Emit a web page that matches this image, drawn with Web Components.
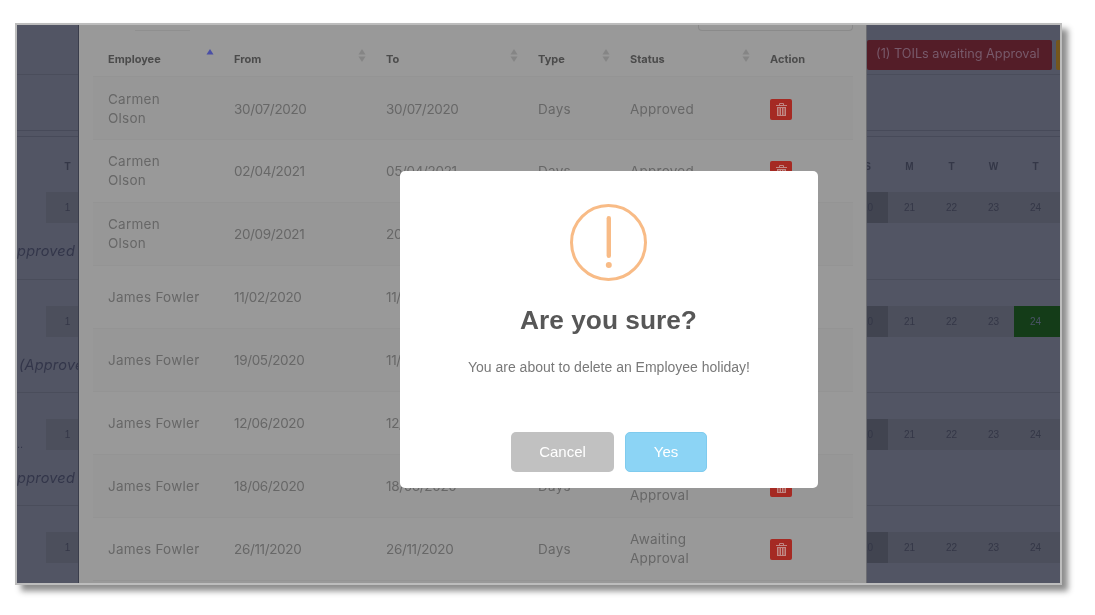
<!DOCTYPE html>
<html lang="en">
<head>
<meta charset="utf-8">
<title>Holidays</title>
<style>
  html, body { margin: 0; background: #fff; }
  body { padding: 23px 0 0 15px; height: 592px; overflow: hidden; }
</style>
</head>
<body>
<app-frame>
  <cal-strip slot="left" side="left"></cal-strip>
  <leave-panel slot="panel"></leave-panel>
  <cal-strip slot="right" side="right"></cal-strip>
  <confirm-dialog slot="dialog" heading="Are you sure?" text="You are about to delete an Employee holiday!"></confirm-dialog>
</app-frame>

<script>
const APP_FONT = '"Inter", "Liberation Sans", sans-serif';

class AppFrame extends HTMLElement {
  constructor() {
    super();
    this.attachShadow({ mode: 'open' });
    this.shadowRoot.innerHTML = `
      <style>
        :host {
          display: block;
          width: 1047px;
          height: 562px;
          box-sizing: border-box;
          border: 2px solid #bdbdbd;
          box-shadow: 6px 6px 6px rgba(0,0,0,0.45);
        }
        .stage {
          position: relative;
          display: grid;
          grid-template-columns: 62px 788px 193px;
          height: 100%;
          overflow: hidden;
          background: #525564;
          filter: blur(0.3px);
        }
      </style>
      <div class="stage">
        <slot name="left"></slot>
        <slot name="panel"></slot>
        <slot name="right"></slot>
        <slot name="dialog"></slot>
      </div>
    `;
  }
}

class CalStrip extends HTMLElement {
  constructor() {
    super();
    this.attachShadow({ mode: 'open' });
  }

  connectedCallback() {
    const left = this.getAttribute('side') === 'left';
    const heads = left ? ['T'] : ['S', 'M', 'T', 'W', 'T'];
    const days = left ? ['1'] : ['20', '21', '22', '23', '24'];
    const notes = left ? ['Approved', '(Approved)', 'Approved', ''] : ['', '', '', ''];
    const leads = ['', '', '..', ''];

    const cells = (row) => days.map((d, i) => {
      let cls = 'cell';
      if (!left && i === 0) cls += ' today';
      if (!left && row === 1 && i === 4) cls += ' green';
      return `<span class="${cls}">${d}</span>`;
    }).join('');

    const rows = notes.map((note, row) => `
      <div class="row ${row === 0 ? 'first' : ''}">
        ${row === 0 ? `<div class="grid head">${left ? '<span class="lead"></span>' : ''}${heads.map(h => `<span>${h}</span>`).join('')}</div>` : ''}
        <div class="grid band">${left ? `<span class="lead">${leads[row]}</span>` : ''}${cells(row)}</div>
        <div class="note ${row === 1 ? 'start' : ''}"><span>${note}</span></div>
      </div>
    `).join('');

    this.shadowRoot.innerHTML = `
      <style>
        :host {
          display: block;
          overflow: hidden;
          min-width: 0;
          font-family: "Liberation Sans", sans-serif;
          color: #33364a;
          box-sizing: border-box;
          ${left ? 'border-right: 1px solid #3a3d4b;' : ''}
        }
        .top { height: 49px; border-bottom: 1px solid #4a4d5b; display: flex; align-items: flex-start; }
        .mid { height: 55px; border-bottom: 1px solid #474a59; }
        .gap { height: 5px; border-bottom: 1px solid #474a59; }
        .alerts { display: flex; gap: 4px; margin-top: 15px; }
        .alert {
          width: 185px;
          height: 30px;
          box-sizing: border-box;
          padding-left: 9px;
          flex: none;
          border-radius: 2px;
          background: #541d28;
          color: #785a6b;
          font: 12.7px/28px ${APP_FONT};
          white-space: nowrap;
        }
        .alert.amber { width: 40px; background: #74561c; }
        .row { padding-top: 26px; box-sizing: border-box; border-bottom: 1px solid #4a4d5b; height: 113px; }
        .row.first { height: 143px; padding-top: 0; }
        .row:last-child { border-bottom: 0; }
        .grid { display: flex; ${left ? '' : 'margin-left: -21px;'} }
        .grid > span { flex: none; width: 42px; padding-left: 1px; box-sizing: border-box; text-align: center; }
        .grid > span:last-child { ${left ? '' : 'width: 46px; padding: 0 3px 0 0;'} }
        .grid > .lead { width: 29px; padding: 0; text-align: left; align-self: flex-end; font-size: 11px; line-height: 12px; }
        .head { height: 55px; padding-top: 24px; box-sizing: border-box; font: bold 10px/12px "Liberation Sans", sans-serif; color: #343747; }
        .band { height: 31px; }
        ${left ? '' : '.band { background: #4c4f5c; }'}
        .cell { font-size: 10px; line-height: 31px; background: #4c4f5c; color: #343747; }
        .cell.today { background: #414450; }
        .cell.green { background: #143c18; color: #4a5366; }
        .note {
          margin-top: 18px;
          height: 20px;
          font: italic 14.5px/20px ${APP_FONT};
          letter-spacing: 0.2px;
          white-space: nowrap;
          padding-right: 3px;
          display: flex;
          justify-content: flex-end;
        }
        .note span { flex: none; }
        .note.start { justify-content: flex-start; padding-left: 2px; }
      </style>
      <div class="top">
        ${left ? '' : '<div class="alerts"><div class="alert">(1) TOILs awaiting Approval</div><div class="alert amber"></div></div>'}
      </div>
      <div class="mid"></div>
      <div class="gap"></div>
      ${rows}
    `;
  }
}

class SortMark extends HTMLElement {
  constructor() {
    super();
    this.attachShadow({ mode: 'open' });
  }

  connectedCallback() {
    const active = this.hasAttribute('active');
    const up = active ? '#4a4fa6' : '#858585';
    const down = active ? 'none' : '#858585';
    this.shadowRoot.innerHTML = `
      <style>:host { display: block; width: 8px; height: 15px; } svg { display: block; }</style>
      <svg width="8" height="15" viewBox="0 0 8 15">
        <path d="M4 1 L7.5 6.5 H0.5 Z" fill="${up}"/>
        <path d="M4 14 L7.5 8.5 H0.5 Z" fill="${down}"/>
      </svg>
    `;
  }
}

class TrashButton extends HTMLElement {
  constructor() {
    super();
    this.attachShadow({ mode: 'open' });
    this.shadowRoot.innerHTML = `
      <style>
        :host {
          display: flex;
          width: 22px;
          height: 21px;
          align-items: center;
          justify-content: center;
          border-radius: 2px;
          background: #a52a23;
        }
        svg { display: block; }
      </style>
      <svg width="11" height="13" viewBox="0 0 11 13" fill="none" stroke="#c08884">
        <path d="M0 2.5 H11 M3.5 2 V0.5 H7.5 V2"/>
        <path d="M1 4 H10 V13 H1 Z" fill="#c08884" stroke="none"/>
        <path d="M3 5 V12 M5.5 5 V12 M8 5 V12" stroke="#a52a23"/>
      </svg>
    `;
  }
}

class LeaveRow extends HTMLElement {
  constructor() {
    super();
    this.attachShadow({ mode: 'open' });
    this.shadowRoot.innerHTML = `
      <style>
        :host {
          display: grid;
          grid-template-columns: 126px 152px 152px 92px 140px 99px;
          height: 63px;
          box-sizing: border-box;
          border-bottom: 1px solid #949494;
          color: #676767;
          font: 13.5px/19px ${APP_FONT};
          letter-spacing: 0.25px;
        }
        :host([striped]) { background: #979797; }
        :host(:first-child) { padding-top: 2px; }
        div { display: flex; align-items: center; padding-left: 15px; white-space: pre-line; }
        .date { letter-spacing: -0.35px; }
      </style>
      <div id="name"></div><div id="from" class="date"></div><div id="to" class="date"></div>
      <div id="type"></div><div id="status"></div>
      <div><trash-button></trash-button></div>
    `;
  }

  set data(row) {
    ['name', 'from', 'to', 'type', 'status'].forEach((key) => {
      this.shadowRoot.getElementById(key).textContent = row[key] || '';
    });
  }
}

class LeavePanel extends HTMLElement {
  constructor() {
    super();
    this.attachShadow({ mode: 'open' });
    this.shadowRoot.innerHTML = `
      <style>
        :host {
          display: block;
          min-width: 0;
          box-sizing: border-box;
          padding: 0 13px 0 14px;
          background: #999999;
          border-right: 1px solid #6c6d72;
          font-family: ${APP_FONT};
        }
        .bar { display: flex; justify-content: space-between; height: 6px; }
        .tab { width: 55px; margin-left: 42px; border-bottom: 1px solid #8f8f8f; }
        .search { width: 155px; box-sizing: border-box; border: 1px solid #8a8a8a; border-top: 0; border-radius: 0 0 4px 4px; }
        .head {
          display: grid;
          grid-template-columns: 126px 152px 152px 92px 140px 99px;
          height: 46px;
          box-sizing: border-box;
          border-bottom: 1px solid #949494;
          color: #4b4b4b;
          font-size: 11px;
          font-weight: 700;
        }
        .head div { display: flex; justify-content: space-between; padding: 0 5px 0 15px; }
        .head span { align-self: flex-end; margin-bottom: 10px; line-height: 13px; }
        .head sort-mark { align-self: flex-end; margin-bottom: 13px; }
      </style>
      <div class="bar"><div class="tab"></div><div class="search"></div></div>
      <div class="head">
        <div><span>Employee</span><sort-mark active></sort-mark></div>
        <div><span>From</span><sort-mark></sort-mark></div>
        <div><span>To</span><sort-mark></sort-mark></div>
        <div><span>Type</span><sort-mark></sort-mark></div>
        <div><span>Status</span><sort-mark></sort-mark></div>
        <div><span>Action</span></div>
      </div>
      <div id="rows"></div>
    `;
  }

  connectedCallback() {
    const rows = [
      { name: 'Carmen\nOlson', from: '30/07/2020', to: '30/07/2020', type: 'Days', status: 'Approved' },
      { name: 'Carmen\nOlson', from: '02/04/2021', to: '05/04/2021', type: 'Days', status: 'Approved' },
      { name: 'Carmen\nOlson', from: '20/09/2021', to: '20' },
      { name: 'James Fowler', from: '11/02/2020', to: '11/' },
      { name: 'James Fowler', from: '19/05/2020', to: '11/' },
      { name: 'James Fowler', from: '12/06/2020', to: '12/' },
      { name: 'James Fowler', from: '18/06/2020', to: '18/06/2020', type: 'Days', status: 'Awaiting\nApproval' },
      { name: 'James Fowler', from: '26/11/2020', to: '26/11/2020', type: 'Days', status: 'Awaiting\nApproval' },
    ];
    const holder = this.shadowRoot.getElementById('rows');
    rows.forEach((row, index) => {
      const el = document.createElement('leave-row');
      if (index % 2 === 0) el.setAttribute('striped', '');
      holder.appendChild(el);
      el.data = row;
    });
  }
}

class ConfirmDialog extends HTMLElement {
  constructor() {
    super();
    this.attachShadow({ mode: 'open' });
  }

  connectedCallback() {
    this.shadowRoot.innerHTML = `
      <style>
        :host {
          position: absolute;
          left: 383px;
          top: 146px;
          width: 418px;
          height: 317px;
          box-sizing: border-box;
          display: flex;
          flex-direction: column;
          align-items: center;
          padding-top: 33px;
          border-radius: 5px;
          background: #fff;
          font-family: "Liberation Sans", sans-serif;
        }
        svg { display: block; flex: none; }
        h2 { margin: 20px 1px 0 0; font-size: 26.3px; line-height: 36px; font-weight: 700; color: #575757; }
        p { margin: 19px 0 0; font-size: 14px; line-height: 20px; color: #797979; }
        .actions { display: flex; gap: 11px; margin-top: 55px; }
        .btn {
          height: 40px;
          box-sizing: border-box;
          border-radius: 5px;
          color: #fff;
          font-size: 15px;
          line-height: 38px;
          text-align: center;
          border: 1px solid transparent;
        }
        .cancel { width: 103px; background: #c1c1c1; }
        .yes { width: 82px; background: #8cd4f5; border-color: #7fcbee; }
      </style>
      <svg width="78" height="78" viewBox="0 0 78 78">
        <circle cx="38.5" cy="38.5" r="37" fill="none" stroke="#f8bb86" stroke-width="3"/>
        <rect x="36.6" y="12" width="4.4" height="42" rx="2.2" fill="#f8bb86"/>
        <circle cx="38.8" cy="61" r="3" fill="#f8bb86"/>
      </svg>
      <h2>${this.getAttribute('heading')}</h2>
      <p>${this.getAttribute('text')}</p>
      <div class="actions">
        <div class="btn cancel">Cancel</div>
        <div class="btn yes">Yes</div>
      </div>
    `;
  }
}

customElements.define('app-frame', AppFrame);
customElements.define('cal-strip', CalStrip);
customElements.define('sort-mark', SortMark);
customElements.define('trash-button', TrashButton);
customElements.define('leave-row', LeaveRow);
customElements.define('leave-panel', LeavePanel);
customElements.define('confirm-dialog', ConfirmDialog);
</script>
</body>
</html>
